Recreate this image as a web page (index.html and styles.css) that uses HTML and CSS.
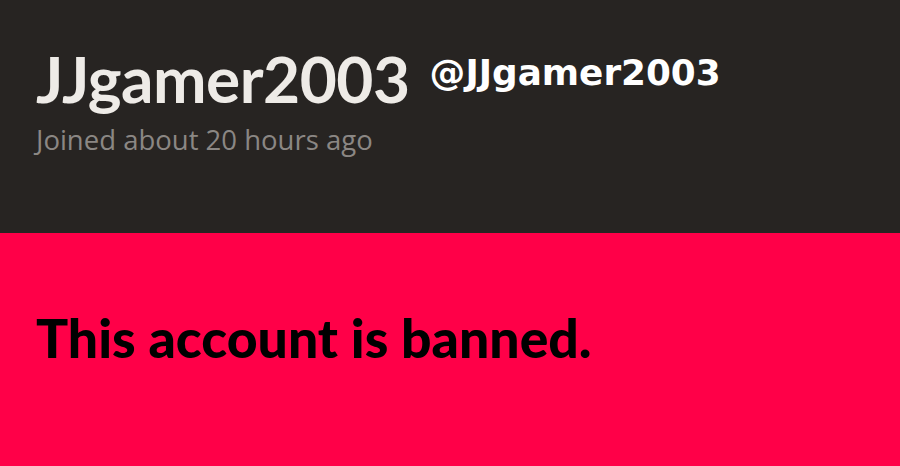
FILE: index.html
```html
<!DOCTYPE html>
<html lang="en">
<head>
  <meta charset="UTF-8" />
  <title>JJgamer2003</title>
  <link rel="stylesheet" href="styles.css">
</head>
<body>
  <div class="profile">
    <div class="names">
      <h1 class="display-name">JJgamer2003</h1>
      <span class="handle">@JJgamer2003</span>
    </div>
    <div class="joined">Joined about 20 hours ago</div>
  </div>
  <div class="banned">
    <h2>This account is banned.</h2>
  </div>
</body>
</html>
```

FILE: styles.css
```css
body {
  margin: 0;
  font-family: Lato, "Open Sans", sans-serif;
}
.profile {
  background: #272422;
  height: 233px;
  box-sizing: border-box;
  padding: 44px 36px 0;
}
.names {
  display: flex;
  align-items: flex-start;
  gap: 20px;
}
.display-name {
  margin: 0;
  font-size: 64px;
  font-weight: 700;
  line-height: 70px;
  color: #eeebe7;
  letter-spacing: -0.5px;
}
.handle {
  margin-top: 11px;
  font-family: "DejaVu Sans", sans-serif;
  font-size: 35.8px;
  line-height: 35px;
  font-weight: 700;
  color: #fff;
}
.joined {
  margin-top: 8px;
  font-family: "Open Sans", sans-serif;
  font-size: 27.5px;
  line-height: 36px;
  color: #8b8784;
}
.banned {
  background: #ff0048;
  height: 233px;
  box-sizing: border-box;
  padding: 74px 36px 0;
}
.banned h2 {
  margin: 0;
  font-size: 53.5px;
  font-weight: 900;
  line-height: 60px;
  color: #000;
}
```
